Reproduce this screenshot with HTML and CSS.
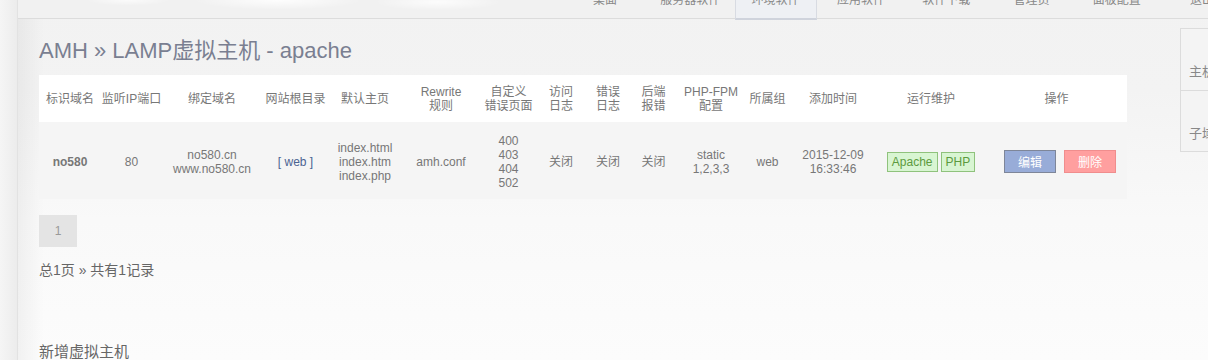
FILE: index.html
```html
<!DOCTYPE html>
<html lang="zh-CN">
<head>
    <meta charset="UTF-8">
    <title>AMH » LAMP虚拟主机 - apache</title>
    <link rel="stylesheet" href="styles.css">
</head>
<body>
    <div class="page">
        <div class="gutter"></div>
        <div class="main">
            <div class="topbar">
                <ul class="nav">
                    <li><a>桌面</a></li>
                    <li><a>服务器软件</a></li>
                    <li class="active"><a>环境软件</a></li>
                    <li><a>应用软件</a></li>
                    <li><a>软件下载</a></li>
                    <li><a>管理员</a></li>
                    <li><a>面板配置</a></li>
                    <li><a>退出</a></li>
                </ul>
            </div>

            <div class="wrap">
                <div class="content">
                    <h1 class="title">AMH » LAMP虚拟主机 - apache</h1>

                    <table class="list">
                        <colgroup>
                            <col style="width:62px"><col style="width:61px"><col style="width:100px">
                            <col style="width:67px"><col style="width:72px"><col style="width:80px">
                            <col style="width:55px"><col style="width:50px"><col style="width:44px">
                            <col style="width:47px"><col style="width:68px"><col style="width:45px">
                            <col style="width:86px"><col style="width:110px"><col style="width:141px">
                        </colgroup>
                        <thead>
                            <tr>
                                <th>标识域名</th>
                                <th>监听IP端口</th>
                                <th>绑定域名</th>
                                <th>网站根目录</th>
                                <th>默认主页</th>
                                <th>Rewrite<br>规则</th>
                                <th>自定义<br>错误页面</th>
                                <th>访问<br>日志</th>
                                <th>错误<br>日志</th>
                                <th>后端<br>报错</th>
                                <th>PHP-FPM<br>配置</th>
                                <th>所属组</th>
                                <th>添加时间</th>
                                <th>运行维护</th>
                                <th>操作</th>
                            </tr>
                        </thead>
                        <tbody>
                            <tr>
                                <td class="strong">no580</td>
                                <td>80</td>
                                <td>no580.cn<br>www.no580.cn</td>
                                <td><a class="link">[ web ]</a></td>
                                <td>index.html<br>index.htm<br>index.php</td>
                                <td>amh.conf</td>
                                <td>400<br>403<br>404<br>502</td>
                                <td>关闭</td>
                                <td>关闭</td>
                                <td>关闭</td>
                                <td>static<br>1,2,3,3</td>
                                <td>web</td>
                                <td>2015-12-09<br>16:33:46</td>
                                <td><span class="tag">Apache</span><span class="tag">PHP</span></td>
                                <td class="ops"><button class="btn btn-edit">编辑</button><button class="btn btn-del">删除</button></td>
                            </tr>
                        </tbody>
                    </table>

                    <div class="pager"><span class="page-num">1</span></div>
                    <p class="summary">总1页 » 共有1记录</p>

                    <h2 class="section-title">新增虚拟主机</h2>
                </div>

                <div class="side">
                    <div class="side-item">
                        <svg class="side-icon" width="14" height="10" viewBox="0 0 14 10"><rect x="1" y="1" width="3" height="3" fill="#aaa"/><rect x="6" y="1" width="7" height="2" fill="#bbb"/></svg>
                        <span>主机管理</span>
                    </div>
                    <div class="side-item">
                        <svg class="side-icon" width="14" height="10" viewBox="0 0 14 10"><rect x="1" y="1" width="3" height="3" fill="#aaa"/><rect x="6" y="1" width="7" height="2" fill="#bbb"/></svg>
                        <span>子域名</span>
                    </div>
                </div>
            </div>
        </div>
    </div>
</body>
</html>
```

FILE: styles.css
```css
* {
    margin: 0;
    padding: 0;
    box-sizing: border-box;
}

html, body {
    width: 1208px;
    height: 360px;
    overflow: hidden;
}

body {
    font-family: "Liberation Sans", "Noto Sans CJK SC", sans-serif;
    font-size: 12px;
    color: #777;
    background: #f6f6f6;
}

.page {
    display: flex;
    height: 360px;
}

.gutter {
    width: 18px;
    flex: none;
    border-right: 1px solid #e2e2e2;
    background: linear-gradient(to right, #f5f5f5, #ececec);
}

.main {
    flex: 1;
    min-width: 0;
    background:
        linear-gradient(to right, rgba(0, 0, 0, 0.045), rgba(0, 0, 0, 0) 26px),
        linear-gradient(#f2f2f2 0, #f3f3f3 90px, #f9f9f9 220px, #fcfcfc 360px);
}

/* top navigation (page is scrolled, only its lower edge shows) */
.topbar {
    height: 19px;
    border-bottom: 1px solid #dcdcdc;
    background:
        radial-gradient(ellipse 120px 14px at 260px 0, rgba(255, 255, 255, 0.9), rgba(255, 255, 255, 0) 70%),
        radial-gradient(ellipse 90px 12px at 420px 2px, rgba(255, 255, 255, 0.8), rgba(255, 255, 255, 0) 70%),
        radial-gradient(ellipse 60px 8px at 110px 0, rgba(255, 255, 255, 0.7), rgba(255, 255, 255, 0) 70%),
        #f1f1f1;
}

.nav {
    list-style: none;
    display: flex;
    gap: 3.3px;
    margin-left: 546px;
    height: 18px;
}

.nav li {
    width: 82px;
    flex: none;
    height: 18px;
    text-align: center;
    overflow: hidden;
}

.nav a {
    display: block;
    margin-top: -7px;
    line-height: 14px;
    font-size: 12px;
    color: #888;
}

.nav li.active {
    height: 20px;
    background: #eef0f4;
    border-left: 1px solid #d8dbe2;
    border-right: 1px solid #d8dbe2;
    border-bottom: 2px solid #cfd3dc;
    position: relative;
    z-index: 1;
}

.wrap {
    display: flex;
    padding-left: 21px;
}

.content {
    width: 1088px;
    flex: none;
}

.title {
    font-size: 22px;
    font-weight: normal;
    color: #7a7f91;
    line-height: 26px;
    margin-top: 19px;
    height: 37px;
}

/* host table */
.list {
    width: 1088px;
    table-layout: fixed;
    border-collapse: collapse;
    text-align: center;
}

.list th {
    height: 47px;
    background: #fff;
    font-weight: normal;
    color: #777;
    line-height: 14px;
    padding: 0;
    white-space: nowrap;
}

.list td {
    height: 77px;
    background: #f5f5f5;
    line-height: 14px;
    padding: 2px 0 0;
    color: #777;
    white-space: nowrap;
}

.list td.strong {
    font-weight: bold;
}

.link {
    color: #4b6392;
}

.tag {
    display: inline-block;
    height: 20px;
    line-height: 18px;
    padding: 0 4px;
    border: 1px solid #8fc27c;
    background: #d8f5d2;
    color: #5c9b3e;
    margin: 0 1.5px;
}

.ops {
    padding-left: 7px !important;
}

.btn {
    width: 52px;
    height: 23px;
    border: 1px solid;
    font-family: "Liberation Sans", "Noto Sans CJK SC", sans-serif;
    font-size: 12px;
    color: #fff;
    margin: 0 4px;
    cursor: pointer;
}

.btn-edit {
    background: #98acd8;
    border-color: #7e8699;
}

.btn-del {
    background: #ff9f9f;
    border-color: #f08d8d;
}

.pager {
    margin-top: 16px;
    height: 32px;
}

.page-num {
    display: inline-block;
    width: 38px;
    height: 32px;
    line-height: 32px;
    text-align: center;
    background: #e4e4e4;
    color: #999;
}

.summary {
    font-size: 14px;
    line-height: 20px;
    margin-top: 13px;
    color: #666;
}

.section-title {
    font-size: 15px;
    font-weight: normal;
    line-height: 20px;
    margin-top: 62px;
    color: #666;
}

/* right side menu */
.side {
    margin-left: 53px;
    margin-top: 9px;
    width: 80px;
    flex: none;
    border: 1px solid #dcdcdc;
    border-right: none;
    align-self: flex-start;
    background: #f4f4f4;
}

.side-item {
    height: 61px;
    display: flex;
    flex-direction: column;
    align-items: flex-start;
    padding-left: 8px;
    font-size: 13px;
    color: #888;
    white-space: nowrap;
}

.side-item + .side-item {
    border-top: 1px solid #dcdcdc;
}

.side-icon {
    margin-top: 16px;
    margin-bottom: 6px;
    margin-left: 18px;
}
```
